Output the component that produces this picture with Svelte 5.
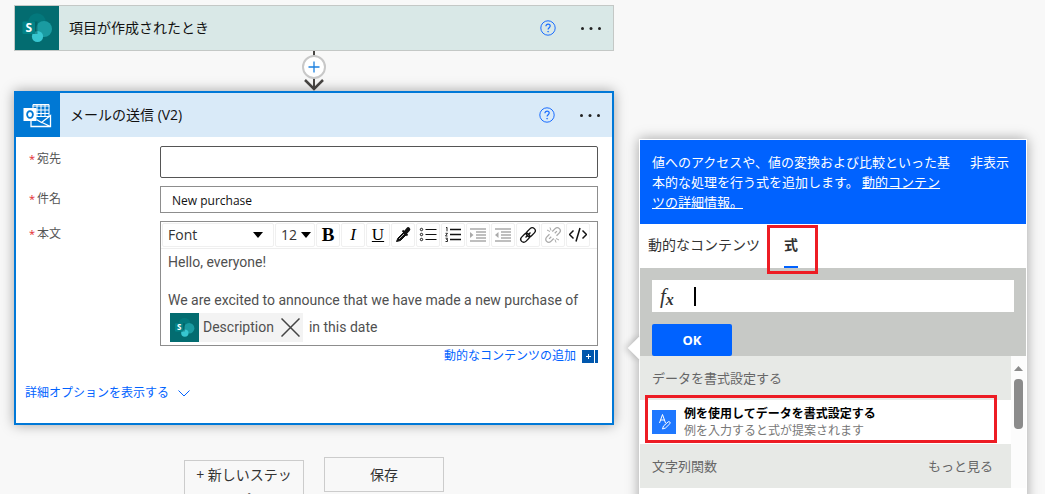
<script lang="ts">
    let subject = "New purchase";
    let recipient = "";
    let expression = "";

    const tools = [
        { id: "bold", label: "Bold" },
        { id: "italic", label: "Italic" },
        { id: "underline", label: "Underline" },
        { id: "color", label: "Color" },
        { id: "bullets", label: "Bulleted list" },
        { id: "numbers", label: "Numbered list" },
        { id: "indent", label: "Indent", off: true },
        { id: "outdent", label: "Outdent", off: true },
        { id: "link", label: "Link" },
        { id: "unlink", label: "Unlink", off: true },
        { id: "code", label: "Code view" },
    ];
</script>

{#snippet sharepoint()}
    <svg class="logo" viewBox="0 0 44 44" aria-hidden="true">
        <rect width="44" height="44" fill="#036c70" />
        <circle cx="22" cy="16" r="8.7" fill="#03787c" />
        <circle cx="29" cy="23" r="8" fill="#1a9ba1" />
        <circle cx="22.5" cy="30.5" r="5.6" fill="#37c6d0" />
        <path d="M13.5 15.5h9v12.500h-9z" fill="#024b4e" opacity="0.45" />
        <rect x="7.500" y="15.500" width="12.500" height="12.500" rx="1" fill="#038387" />
        <text x="13.8" y="26.300" text-anchor="middle" class="letter" fill="#fff">S</text>
    </svg>
{/snippet}

{#snippet actions()}
    <button class="icon" aria-label="Help">
        <svg width="16" height="16" viewBox="0 0 16 16" fill="none" stroke="#1a6dff">
            <circle cx="8" cy="8" r="7.2" />
            <path d="M5.900 6.300c0-3 4.300-2.800 4.300-.2 0 1.700-2.100 1.700-2.100 3.500" stroke-width="1.200" />
            <circle cx="8.100" cy="11.700" r="0.400" />
        </svg>
    </button>
    <button class="icon" aria-label="Menu">
        <svg width="22" height="16" viewBox="0 0 22 16" fill="#222">
            <circle cx="2.500" cy="8.500" r="1.500" />
            <circle cx="11" cy="8.500" r="1.500" />
            <circle cx="19.500" cy="8.500" r="1.500" />
        </svg>
    </button>
{/snippet}

{#snippet caretDown()}
    <svg width="10" height="6" viewBox="0 0 10 6" aria-hidden="true"><path d="M0 0h10L5 6z" fill="#000" /></svg>
{/snippet}

{#snippet glyph(id)}
    {#if id === "bold"}
        <b class="char">B</b>
    {:else if id === "italic"}
        <i class="char">I</i>
    {:else if id === "underline"}
        <u class="char">U</u>
    {:else}
        <svg width="18" height="18" viewBox="0 0 18 18" fill="none" stroke="#111">
            {#if id === "color"}
                <path d="M2.500 15.500l1.500-3.500 6-6 2.500 2.500-6 6z" fill="#111" />
                <path d="M8.500 4.500l5 5" stroke-width="1.800" />
                <path d="M11 7l3.200-3.700" stroke-width="4.200" stroke-linecap="round" />
                <path d="M5 13l5-5" stroke="#fff" stroke-width="0.700" />
            {:else if id === "bullets"}
                <path d="M6.500 3.500h11M6.500 8.500h11M6.500 13.500h11" />
                <circle cx="2.500" cy="3.500" r="1.200" />
                <circle cx="2.500" cy="8.500" r="1.200" />
                <circle cx="2.500" cy="13.500" r="1.200" />
            {:else if id === "numbers"}
                <path d="M6 3.500h11M6 8.500h11M6 13.500h11" stroke-width="1.500" />
                <path d="M2 1.800l1-.5v4M1.500 7.300h2l-2 2.700h2M1.500 12.200h2l-1 1.300h1v2h-2" stroke-width="0.900" />
            {:else if id === "indent"}
                <path d="M1 3h16M7 6h10M7 9h10M7 12h10M1 15h16" stroke="#aaa" stroke-width="1.400" />
                <path d="M1 6l3.500 3-3.500 3z" fill="#aaa" stroke="none" />
            {:else if id === "outdent"}
                <path d="M1 3h16M7 6h10M7 9h10M7 12h10M1 15h16" stroke="#aaa" stroke-width="1.400" />
                <path d="M4.500 6l-3.500 3 3.500 3z" fill="#aaa" stroke="none" />
            {:else if id === "link"}
                <g transform="rotate(-45 9 9)" stroke-width="1.300">
                    <rect x="0" y="6" width="10" height="6" rx="3" />
                    <rect x="8" y="6" width="10" height="6" rx="3" />
                    <path d="M5.500 9h7" />
                </g>
            {:else if id === "unlink"}
                <g transform="rotate(-45 9 9)" stroke="#aaa" stroke-width="1.300">
                    <path d="M7 6H3a3 3 0 0 0 0 6h4M11 6h4a3 3 0 0 1 0 6h-4M3.500 9h3M11.500 9h3" />
                </g>
                <path d="M3 4l3 1.500M6 1.500l1 3M15 14l-3-1.500M12 16.500l-1-3" stroke="#aaa" />
            {:else if id === "code"}
                <path d="M4.500 4.500L.5 8.500l4 4M13.500 4.500l4 4-4 4M11 2L7 15.500" stroke-width="1.500" />
            {/if}
        </svg>
    {/if}
{/snippet}

<main>
    <section class="designer">
        <article class="card trigger">
            <header>
                {@render sharepoint()}
                <h2>項目が作成されたとき</h2>
                {@render actions()}
            </header>
        </article>

        <button class="connector" aria-label="Insert step">
            <svg width="24" height="40" viewBox="0 0 24 40" fill="none">
                <path d="M12 0v38" stroke="#484644" stroke-width="2" />
                <path d="M3 29l9 9 9-9" stroke="#484644" stroke-width="2.500" />
                <circle cx="12" cy="16" r="11" fill="#fff" stroke="#c8c8c8" stroke-width="2" />
                <path d="M12 10.500v11M6.500 16h11" stroke="#1c80df" stroke-width="1.300" />
            </svg>
        </button>

        <article class="card mail">
            <header>
                <svg class="logo" viewBox="0 0 44 44" aria-hidden="true" fill="none" stroke="#fff">
                    <rect width="44" height="44" fill="#0078d4" stroke="none" />
                    <path d="M17 11.500h16v12H17zM16.500 13h17M21 12v12M25 12v12M29 12v12M17 17h16M17 20.500h16" />
                    <path d="M15 28v5.500h19.500V22.500l-9 7-5-3M26 29.500l8.500 4" stroke-width="1.300" />
                    <rect x="7.500" y="15" width="13" height="13" fill="#fff" stroke="none" />
                    <ellipse cx="14" cy="21.500" rx="2.900" ry="3.400" stroke="#0078d4" stroke-width="1.800" />
                </svg>
                <h2>メールの送信 (V2)</h2>
                {@render actions()}
            </header>

            <div class="fields">
                <label for="to"><span class="required">*</span>宛先</label>
                <input id="to" class="to" type="text" bind:value={recipient} />

                <label for="subject"><span class="required">*</span>件名</label>
                <input id="subject" class="subject" type="text" bind:value={subject} />

                <span class="label" id="body-label"><span class="required">*</span>本文</span>
                <div class="editor">
                    <div class="toolbar">
                        <div class="pick font">
                            <select aria-label="Font"><option>Font</option></select>
                            {@render caretDown()}
                        </div>
                        <div class="pick size">
                            <select aria-label="Size"><option>12</option></select>
                            {@render caretDown()}
                        </div>
                        {#each tools as tool}
                            <button class="tool" aria-label={tool.label} disabled={tool.off}>{@render glyph(tool.id)}</button>
                        {/each}
                    </div>
                    <div class="content" role="textbox" tabindex="0" aria-multiline="true" aria-labelledby="body-label">
                        <p>Hello, everyone!</p>
                        <p>&nbsp;</p>
                        <p>We are excited to announce that we have made a new purchase of</p>
                        <p class="tokens">
                            <span class="token">
                                {@render sharepoint()}
                                <span>Description</span>
                                <button class="icon" aria-label="Remove">
                                    <svg width="19" height="19" viewBox="0 0 19 19" stroke="#444" stroke-width="1.500">
                                        <path d="M.5.5l18 18M18.500.5l-18 18" />
                                    </svg>
                                </button>
                            </span>
                            <span>in this date</span>
                        </p>
                    </div>
                </div>
            </div>

            <div class="dynamic">
                <a href="#dynamic">動的なコンテンツの追加</a>
                <svg width="16" height="13" viewBox="0 0 16 13" aria-hidden="true">
                    <path d="M0 0h12v13H0zM13 0h3v13h-3z" fill="#0057ad" />
                    <path d="M6.500 4v5M4 6.500h5" stroke="#fff" />
                </svg>
            </div>

            <a class="advanced" href="#advanced">
                詳細オプションを表示する
                <svg width="12" height="7" viewBox="0 0 12 7" fill="none" stroke="#0062ff"><path d="M.5.5L6 6l5.500-5.500" /></svg>
            </a>
        </article>

        <div class="footer">
            <button class="new-step">+ 新しいステップ</button>
            <button class="save">保存</button>
        </div>
    </section>

    <aside class="panel">
        <div class="intro">
            <p>値へのアクセスや、値の変換および比較といった基本的な処理を行う式を追加します。 <a href="#learn">動的コンテンツの詳細情報。</a></p>
            <button class="hide">非表示</button>
        </div>

        <nav class="tabs">
            <button class="tab">動的なコンテンツ</button>
            <button class="tab active">式<span class="mark"></span></button>
        </nav>

        <div class="formula">
            <label class="fx">
                <span class="f">f<sub>x</sub></span>
                <span class="cursor"></span>
                <input type="text" aria-label="fx" bind:value={expression} />
            </label>
            <button class="ok">OK</button>
        </div>

        <div class="results">
            <div class="list">
                <h3>データを書式設定する</h3>
                <button class="item">
                    <svg width="24" height="24" viewBox="0 0 24 24" fill="none" stroke="#fff" aria-hidden="true">
                        <rect width="24" height="24" fill="#1f78ff" stroke="none" />
                        <path d="M7.500 13l3-8.500 3 8.500M8.500 10h4" />
                        <path d="M10.500 19l1-3 4.500-4a1.200 1.200 0 0 1 1.800 1.800l-4.300 4.200z" />
                    </svg>
                    <span class="lines">
                        <strong>例を使用してデータを書式設定する</strong>
                        <span>例を入力すると式が提案されます</span>
                    </span>
                    <span class="mark"></span>
                </button>
                <h3>文字列関数 <a href="#more">もっと見る</a></h3>
            </div>
            <div class="scrollbar">
                <svg width="9" height="5" viewBox="0 0 9 5" aria-hidden="true"><path d="M0 5h9L4.500 0z" fill="#8b8b8b" /></svg>
                <div class="thumb"></div>
            </div>
        </div>
    </aside>
</main>

<style>
    :global(body) {
        background: #f8f8f8;
    }

    * {
        box-sizing: border-box;
    }

    main {
        display: grid;
        grid-template-columns: minmax(0, 600fr) minmax(0, 388fr);
        gap: 25px;
        height: 100vh;
        padding: 5px 18px 0 14px;
        overflow: hidden;
        font: 12px/20px "Open Sans", "Noto Sans CJK JP", sans-serif;
        color: #333;
    }

    button, input, select {
        font: inherit;
        color: inherit;
        background: none;
        border: 0;
        margin: 0;
        padding: 0;
    }

    h2, h3, p {
        margin: 0;
        font-weight: 400;
    }

    svg {
        display: block;
        flex: none;
    }

    a {
        color: #0062ff;
        text-decoration: none;
    }

    .designer {
        display: flex;
        flex-direction: column;
    }

    .card header {
        display: flex;
        align-items: center;
        height: 44px;
        padding-right: 11px;
    }

    .card h2 {
        flex: 1;
        padding-left: 10px;
        font-size: 14px;
        color: #111;
    }

    .logo {
        width: 44px;
        height: 44px;
    }

    .letter {
        font: bold 12px "Open Sans", sans-serif;
    }

    header .icon + .icon {
        margin-left: 24px;
    }

    .trigger {
        border: 1px solid #c4c8c6;
        background: #d9e8e7;
    }

    .connector {
        align-self: center;
    }

    .mail {
        border: 2px solid #0078d7;
        background: #fff;
        box-shadow: 0 0 12px rgba(0, 0, 0, 0.35);
    }

    .mail header {
        background: #d9eaf8;
    }

    .fields {
        display: grid;
        grid-template-columns: 131px minmax(0, 1fr);
        align-items: start;
        row-gap: 8px;
        padding: 9px 14px 0 13px;
    }

    .fields label, .label {
        display: flex;
        gap: 2px;
        line-height: 26px;
        color: #555;
    }

    .required {
        font-size: 11px;
        color: #e3262d;
    }

    .to, .subject {
        width: 100%;
        padding: 0 11px;
        border: 1px solid #8d8d8d;
        color: #111;
    }

    .to {
        height: 32px;
        border-color: #555;
        border-radius: 2px;
    }

    .subject {
        height: 27px;
        padding-top: 2px;
    }

    .editor {
        border: 1px solid #8d8d8d;
    }

    .toolbar {
        display: flex;
        gap: 1px;
        padding: 1px;
        border-bottom: 1px solid #eee;
    }

    .pick, .tool {
        display: flex;
        align-items: center;
        height: 24px;
        border: 1px solid #f0f0f0;
        border-radius: 2px;
    }

    .pick {
        padding-left: 5px;
        font-size: 14px;
    }

    .pick select {
        appearance: none;
        flex: 1;
        min-width: 0;
    }

    .font {
        width: 112px;
        padding-right: 10px;
    }

    .size {
        width: 40px;
        padding-right: 3px;
    }

    .tool {
        justify-content: center;
        width: 24px;
    }

    .char {
        font: 17px/20px "Liberation Serif", serif;
        color: #000;
    }

    b.char {
        font-weight: 700;
        font-size: 19px;
    }

    i.char {
        font-style: italic;
    }

    .content {
        padding: 4px 0 3px 7px;
        font-family: Roboto, sans-serif;
        font-size: 14px;
        line-height: 19px;
        color: #505050;
        outline: none;
    }

    .tokens {
        display: flex;
        align-items: center;
        gap: 6px;
        padding: 3px 2px 0;
    }

    .token {
        display: flex;
        align-items: center;
        gap: 4px;
        padding-right: 3px;
        background: #f3f3f3;
    }

    .token .logo {
        width: 29px;
        height: 29px;
    }

    .token .icon {
        padding-left: 3px;
    }

    .dynamic {
        display: flex;
        justify-content: flex-end;
        align-items: center;
        gap: 6px;
        padding-right: 14px;
    }

    .advanced {
        display: flex;
        align-items: center;
        gap: 9px;
        padding: 17px 9px 20px;
    }

    .footer {
        display: flex;
        justify-content: center;
        align-items: baseline;
        gap: 20px;
        padding-top: 32px;
    }

    .footer button {
        width: 120px;
        height: 35px;
        border: 1px solid #ccc;
        font-size: 14px;
    }

    .footer .new-step {
        padding: 1px 10px;
        line-height: 25px;
    }

    .panel {
        position: relative;
        align-self: start;
        margin-top: 134px;
        height: 400px;
        border: 1px solid #fff;
        background: #fff;
        box-shadow: 0 0 12px rgba(0, 0, 0, 0.35);
    }

    .panel::before {
        content: "";
        position: absolute;
        top: 200px;
        left: -9px;
        width: 16px;
        height: 16px;
        background: #fff;
        box-shadow: -2px 2px 6px rgba(0, 0, 0, 0.2);
        transform: rotate(45deg);
    }

    .intro {
        position: relative;
        display: flex;
        align-items: flex-start;
        gap: 18px;
        padding: 12px 17px 12px 12px;
        background: #0062ff;
        font-size: 13px;
        color: #fff;
    }

    .intro p {
        flex: 1;
    }

    .intro a {
        color: #fff;
        text-decoration: underline;
    }

    .tabs {
        display: flex;
        gap: 24px;
        height: 44px;
        padding-left: 8px;
        font-size: 14px;
    }

    .tab {
        position: relative;
        border-bottom: 2px solid transparent;
    }

    .active {
        border-color: #0062ff;
        font-weight: 700;
    }

    .mark {
        position: absolute;
        border: 3px solid #ed1c24;
        pointer-events: none;
    }

    .active .mark {
        inset: 1px -20px -8px -17px;
        z-index: 1;
    }

    .formula {
        position: relative;
        padding: 12px 12px 0;
        background: #c7c9c6;
    }

    .fx {
        display: flex;
        align-items: center;
        height: 32px;
        margin-bottom: 12px;
        padding-left: 8px;
        background: #fff;
    }

    .f {
        width: 34px;
        font: italic 21px/24px "Liberation Serif", serif;
    }

    .f sub {
        font-size: 16px;
        font-weight: 700;
        line-height: 0;
        vertical-align: -2px;
    }

    .cursor {
        width: 2px;
        height: 19px;
        background: #000;
    }

    .fx input {
        flex: 1;
        min-width: 0;
        outline: none;
    }

    .ok {
        display: block;
        width: 80px;
        height: 32px;
        border-radius: 2px;
        background: #0062ff;
        font-size: 13px;
        font-weight: 700;
        color: #fff;
    }

    .results {
        display: flex;
    }

    .list {
        position: relative;
        flex: 1;
    }

    .list h3 {
        display: flex;
        justify-content: space-between;
        padding: 0 18px 0 12px;
        background: #e7e9e6;
        font-size: 13px;
        line-height: 44px;
        color: #666;
    }

    .list h3 a {
        color: #666;
    }

    .item {
        position: relative;
        display: flex;
        align-items: center;
        gap: 8px;
        width: 100%;
        height: 44px;
        padding: 0 12px;
        text-align: left;
    }

    .lines {
        display: grid;
        line-height: 17px;
        color: #777;
    }

    .lines strong {
        color: #000;
    }

    .item .mark {
        inset: -5px 14px 1px 5px;
    }

    .scrollbar {
        display: flex;
        flex-direction: column;
        align-items: center;
        gap: 8px;
        width: 15px;
        padding-top: 10px;
        background: #fcfcfc;
    }

    .thumb {
        width: 9px;
        height: 50px;
        border-radius: 4px;
        background: #8b8b8b;
    }
</style>
